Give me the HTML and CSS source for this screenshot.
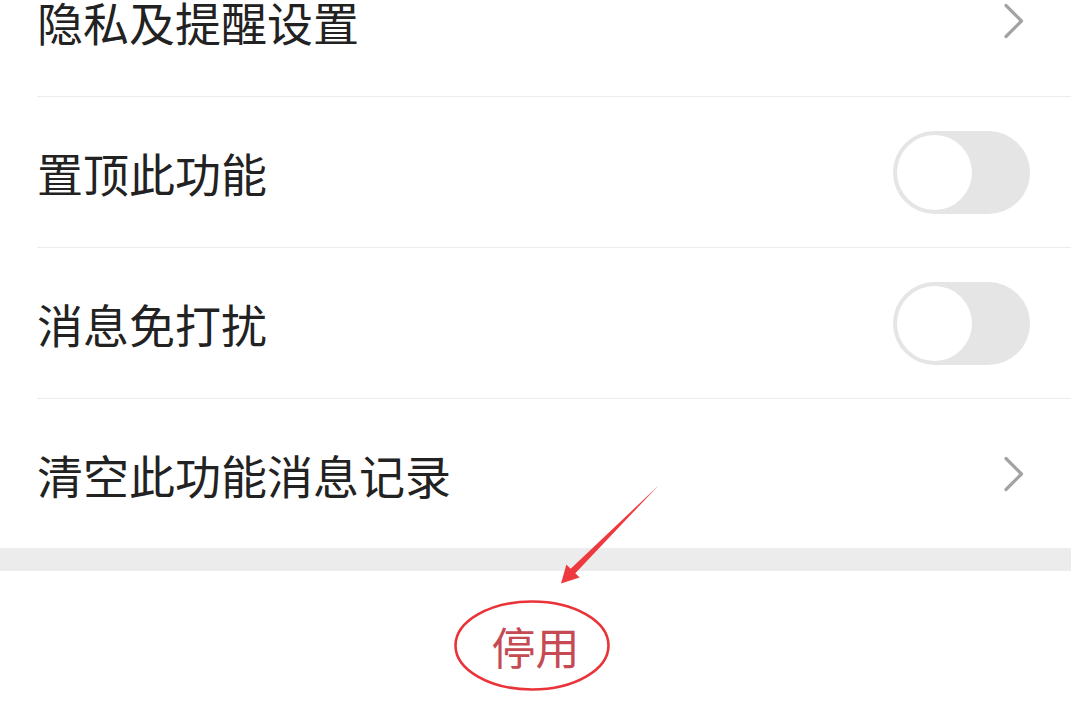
FILE: index.html
```html
<!DOCTYPE html>
<html lang="zh-CN">
<head>
<meta charset="utf-8">
<link rel="stylesheet" href="styles.css">
</head>
<body>
<div class="page">
  <div class="list">
    <div class="row">
      <span class="label">隐私及提醒设置</span>
      <span class="end"><svg class="chev" viewBox="0 0 26 36" width="26" height="36"><path d="M6 2.5 L21.5 18 L6 33.5" fill="none" stroke="#a3a3a3" stroke-width="3.2" stroke-linecap="round" stroke-linejoin="round"/></svg></span>
    </div>
    <div class="row">
      <span class="label">置顶此功能</span>
      <span class="end"><span class="toggle"><span class="knob"></span></span></span>
    </div>
    <div class="row">
      <span class="label">消息免打扰</span>
      <span class="end"><span class="toggle"><span class="knob"></span></span></span>
    </div>
    <div class="row last">
      <span class="label">清空此功能消息记录</span>
      <span class="end"><svg class="chev" viewBox="0 0 26 36" width="26" height="36"><path d="M6 2.5 L21.5 18 L6 33.5" fill="none" stroke="#a3a3a3" stroke-width="3.2" stroke-linecap="round" stroke-linejoin="round"/></svg></span>
    </div>
  </div>
  <div class="band"></div>
  <div class="action">
    <span class="stop">停用</span>
  </div>
  <svg class="annot" viewBox="0 0 1071 721" width="1071" height="721">
    <polygon points="658.5,485.5 575.3,573.3 579.6,577.6 561,583.5 566.4,564.4 570.7,568.7" fill="#ee3a3e"/>
    <ellipse cx="532" cy="645.5" rx="76.5" ry="44" fill="none" stroke="#ea3338" stroke-width="2.6"/>
  </svg>
</div>
</body>
</html>
```
FILE: styles.css
```css
html, body {
  margin: 0;
  padding: 0;
  background: #ffffff;
}
body {
  font-family: "Noto Sans CJK SC", "Noto Sans", sans-serif;
  color: #222222;
}
.page {
  position: relative;
  width: 1071px;
  height: 721px;
  overflow: hidden;
  background: #ffffff;
}
.list {
  margin-top: -54px;
}
.row {
  display: flex;
  align-items: center;
  justify-content: space-between;
  height: 150px;
  margin-left: 37px;
  padding-right: 41px;
  border-bottom: 1px solid #ececec;
}
.row.last {
  border-bottom: none;
  height: 149px;
}
.label {
  font-size: 46px;
  line-height: 1;
  letter-spacing: 0;
  color: #222222;
}
.end {
  display: flex;
  justify-content: flex-end;
  align-items: center;
  width: 137px;
}
.chev {
  display: block;
  margin-right: 4px;
}
.toggle {
  position: relative;
  display: block;
  width: 137px;
  height: 83px;
  border-radius: 42px;
  background: #e5e5e5;
}
.knob {
  position: absolute;
  left: 4px;
  top: 4px;
  width: 75px;
  height: 75px;
  border-radius: 50%;
  background: #ffffff;
}
.band {
  height: 23px;
  background: #ececec;
}
.action {
  display: flex;
  justify-content: center;
  padding-top: 49px;
  padding-left: 0;
}
.stop {
  font-size: 44px;
  line-height: 52px;
  color: #c64a54;
}
.annot {
  position: absolute;
  left: 0;
  top: 0;
  pointer-events: none;
}
```
